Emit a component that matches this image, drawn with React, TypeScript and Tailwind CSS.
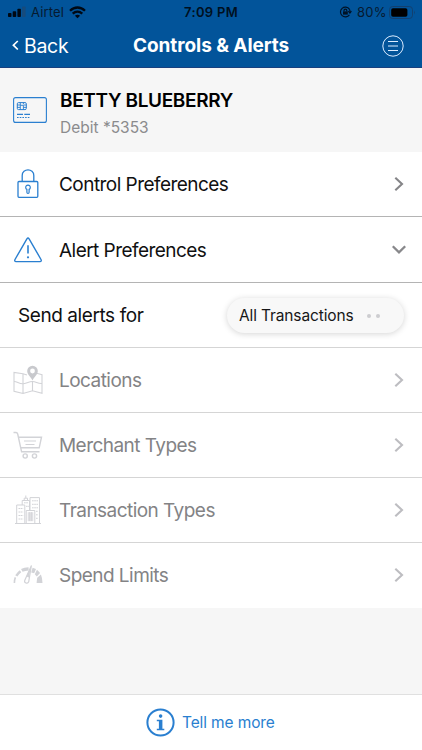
import React from 'react';

const BLUE = '#2a7fd0';
const PALE = '#d2d3d7';

function Chevron({ color }: { color: string }) {
  return (
    <svg width="12" height="16" viewBox="0 0 12 16" fill="none" stroke={color} strokeWidth="2.1">
      <path d="M2.3 1.8 L9 8 L2.3 14.2" />
    </svg>
  );
}

function ChevronDown() {
  return (
    <svg width="16" height="12" viewBox="0 0 16 12" fill="none" stroke="#88888b" strokeWidth="2.3">
      <path d="M1.8 2.2 L8 8.3 L14.2 2.2" />
    </svg>
  );
}

function StatusBar() {
  return (
    <div className="flex h-6 items-center text-[#061a30]">
      <div className="flex w-[183px] items-center pl-2">
        <svg width="19" height="12" viewBox="0 0 19 12" fill="#000914">
          <rect x="0" y="7" width="3.5" height="4" rx=".8" />
          <rect x="4.7" y="5.2" width="3.5" height="5.8" rx=".8" />
          <rect x="9.4" y="2.8" width="3.5" height="8.2" rx=".8" />
          <rect x="14.1" y="0.5" width="3.5" height="10.5" rx=".8" fill="#174b7c" />
        </svg>
        <span className="ml-1 text-[13px] leading-6 tracking-[0.15px]">Airtel</span>
        <svg className="ml-[5px]" width="17" height="13" viewBox="0 0 17 13" fill="none" stroke="#000914" strokeWidth="2.3">
          <path d="M1 4.7 C5.4 .4 11.6 .4 16 4.7" />
          <path d="M3.7 7.6 C6.6 5 10.4 5 13.3 7.6" />
          <path d="M8.5 12.3 L5.9 9.7 C7.4 8.4 9.6 8.4 11.1 9.7Z" fill="#000914" stroke="none" />
        </svg>
      </div>
      <span className="w-[156px] pl-px text-[13px] font-semibold leading-6 tracking-[0.35px] text-[#00101f]">7:09 PM</span>
      <svg width="13" height="12" viewBox="0 0 13 12" fill="none" stroke="#001225" strokeWidth="1.2">
        <path d="M10.4 3.2 A4.9 4.9 0 1 0 10.4 8.8 M9.3 5.2 L10.9 7 L12.4 5.2" />
        <path d="M10.9 6.6 A4.9 4.9 0 0 0 10.4 3.2" />
        <rect x="4" y="5.4" width="4.8" height="3.2" fill="#001225" stroke="none" />
        <path d="M5 5.6 V4.6 A1.4 1.4 0 0 1 7.8 4.6 V5.6" />
      </svg>
      <span className="ml-[5px] w-[32px] text-[13px] leading-6 tracking-[0.2px]">80%</span>
      <svg width="27" height="13" viewBox="0 0 27 13" fill="none">
        <rect x=".5" y=".5" width="23" height="12" rx="3.2" stroke="#12406f" />
        <rect x="2.2" y="2.2" width="16.2" height="8.6" rx="1.8" fill="#000" />
        <path d="M25 4.6 Q26.8 6.5 25 8.4Z" fill="#12406f" />
      </svg>
    </div>
  );
}

function Header() {
  return (
    <header className="h-[68px] border-b border-[#18407f] bg-[#02549a]">
      <StatusBar />
      <div className="flex h-[43px] items-center text-white">
        <div className="flex w-[133px] items-center pl-3">
          <svg width="7" height="11" viewBox="0 0 7 11" fill="none" stroke="#fff" strokeWidth="1.7">
            <path d="M5.8 1 L1.4 5.2 L5.8 9.5" />
          </svg>
          <span className="ml-[5px] text-[19.5px] leading-6 tracking-[-0.3px]">Back</span>
        </div>
        <h1 className="w-[249px] whitespace-nowrap text-[19px] font-bold leading-6 tracking-[-0.06px]">Controls &amp; Alerts</h1>
        <svg width="22" height="22" viewBox="0 0 22 22" fill="none" stroke="#dcecff" strokeWidth="1">
          <circle cx="11" cy="11" r="10.2" />
          <path d="M6 6.5 H16 M6 11 H16 M6 15.5 H16" />
        </svg>
      </div>
    </header>
  );
}

function CardIcon() {
  return (
    <svg width="34" height="26" viewBox="0 0 34 26" fill="none" stroke={BLUE}>
      <rect x=".6" y=".6" width="32.8" height="24.8" rx="2" strokeWidth="1.1" />
      <rect x="4.3" y="5.6" width="9" height="7" rx="1.2" />
      <path d="M4 8 H7.3 M4 10.4 H7.3 M7.3 5.6 V12.6 M10.4 8 H13.4 M10.4 10.4 H13.4 M7.3 8.3 H10.4 V12.6 M10.4 5.6 V7" strokeWidth=".9" />
      <path d="M4 17.3 H10 M11.3 17.3 H17" strokeWidth="1.2" />
      <path d="M4 20.5 H17" strokeWidth="1.2" strokeDasharray="1.6 1.1" />
    </svg>
  );
}

function LockIcon() {
  return (
    <svg width="22" height="30" viewBox="0 0 22 30" fill="none" stroke={BLUE} strokeWidth="1.3">
      <rect x="1" y="12.5" width="19.8" height="15.8" rx="1" />
      <path d="M5.2 12.5 V6.5 C5.2 -1 16.8 -1 16.8 6.5 V12.5" />
      <path d="M9.9 20.4 A2.3 2.3 0 1 1 12.1 20.4 V23.3 Q12.1 24.5 11 24.5 Q9.9 24.5 9.9 23.3Z" strokeWidth="1.2" />
    </svg>
  );
}

function WarningIcon() {
  return (
    <svg width="30" height="26" viewBox="0 0 30 26" fill="none" stroke={BLUE} strokeWidth="1.4">
      <path d="M13.9 1.8 Q15 .3 16.1 1.8 L28 22.5 Q28.9 24.4 26.9 24.6 H3.1 Q1.1 24.4 2 22.5Z" strokeLinejoin="round" />
      <path d="M15 8.2 V16.5" strokeWidth="1.6" />
      <circle cx="15" cy="20.3" r="1.1" fill={BLUE} stroke="none" />
    </svg>
  );
}

function MapIcon() {
  return (
    <svg width="30" height="30" viewBox="0 0 30 30" fill="none" stroke={PALE} strokeWidth="1.1">
      <path d="M14 10 L10 8.8 L1 7.4 V26.3 L10 28.5 L19.5 25.7 L29 28.2 V9.6 L23.5 8.2 M10 8.8 V28.5 M19.5 16 V25.7" />
      <path d="M1 16.5 C4 16.3 6 19 10 18.8 C13 18.6 16 16.5 19.5 16.5 C23 16.5 25 19 29 18.5" />
      <path d="M19.5 15.5 C18 12 14.2 9.8 14.2 6 A5.3 5.3 0 0 1 24.8 6 C24.8 9.8 21 12 19.5 15.5Z M19.5 3.6 A2.4 2.4 0 1 0 19.5 8.4 A2.4 2.4 0 1 0 19.5 3.6Z" fill="#c8c9cd" fillRule="evenodd" stroke="none" />
    </svg>
  );
}

function CartIcon() {
  return (
    <svg width="30" height="28" viewBox="0 0 30 28" fill="none" stroke={PALE} strokeWidth="1.4">
      <path d="M.5 1.5 H3 Q4.3 1.5 4.7 3 L8.6 20.8 H26.5 M5.5 6.2 H28.5 L26.2 16.8 H7.8" />
      <path d="M11 10 H23 M12.5 13.5 H21.5" strokeWidth="1.1" />
      <circle cx="12.2" cy="25" r="2.1" />
      <circle cx="21.5" cy="25" r="2.1" />
    </svg>
  );
}

function BuildingsIcon() {
  return (
    <svg width="28" height="30" viewBox="0 0 28 30" fill="none" stroke={PALE} strokeWidth="1">
      <path d="M1 28.5 H27 M2.7 28.5 V10 H10.8 V28.5 M8.2 10 V5.5 H15.5 V15 M10.2 5.5 V3.2 H13.5 V5.5 M11.8 3.2 V.5 M16 15 V2.6 H25.5 V28.5 M12.2 28.5 V15.5 H20.8 V28.5" />
      <path d="M4.5 13.5 H9.2 M4.5 17 H9.2 M4.5 20.5 H9.2 M4.5 24 H9.2 M18 5.8 H24 M18 9.3 H24 M18 12.8 H24 M22 16.3 H24 M22 19.8 H24 M22 23.3 H24 M10 7.8 H14 M12 11.3 H15" strokeDasharray="1.7 .5" />
      <rect x="13.7" y="17.2" width="5.6" height="9" fill="#e1e1e5" stroke="none" />
      <path d="M15.6 17 V26 M17.5 17 V26" strokeWidth=".7" />
    </svg>
  );
}

function GaugeIcon() {
  return (
    <svg width="30" height="20" viewBox="0 0 30 20" fill="none" stroke={PALE}>
      <path d="M1.4 18 Q1.3 15 2.4 12.4" strokeWidth="1.6" />
      <path d="M3.3 10.9 Q5 8 7.5 6.2" strokeWidth="2.5" />
      <path d="M8.8 5.4 Q11.5 3.9 15.6 3.8" strokeWidth="3.2" />
      <path d="M19.6 2.8 L23 4 L21.2 8.2 L18.2 7.4Z M24 4.7 L27.1 8 L23.8 11.6 L21.8 9.2Z M27.9 9.4 Q29.5 13 29.5 18 H23.6 Q23.8 15 24.2 12.7Z" fill={PALE} stroke="none" />
      <path d="M18.3 .8 L15.7 16.8 A2.1 2.1 0 1 1 11.8 15.2Z" fill="#fff" strokeWidth="1.2" strokeLinejoin="round" />
      <path d="M18.3 1 L15.8 12.5 L13.4 11.5Z" fill={PALE} stroke="none" />
    </svg>
  );
}

interface RowProps {
  icon: React.ReactNode;
  label: string;
  height?: string;
  muted?: boolean;
  open?: boolean;
  last?: boolean;
}

function Row({ icon, label, height = 'h-[65px]', muted, open, last }: RowProps) {
  const border = last ? 'border-transparent' : muted ? 'border-[#d5d5d5]' : 'border-[#b4b4b4]';
  return (
    <div className={`flex shrink-0 items-center border-b bg-white ${height} ${border}`}>
      <div className="flex w-[59px] items-center justify-center pr-1">{icon}</div>
      <span className={`flex-1 whitespace-nowrap pt-[2px] text-[19px] leading-6 tracking-[-0.54px] ${muted ? 'text-[#838385]' : 'text-[#101011]'}`}>{label}</span>
      <div className="flex w-[46px] justify-center">
        {open ? <ChevronDown /> : <Chevron color={muted ? '#bdbdc1' : '#858588'} />}
      </div>
    </div>
  );
}

export default function App() {
  return (
    <main className="flex h-[750px] w-[422px] flex-col overflow-hidden bg-[#f6f6f6] font-['Inter','Liberation_Sans',sans-serif]">
      <Header />
      <section className="flex h-[84px] items-center pl-[13px]">
        <CardIcon />
        <div className="ml-[13px] pt-2">
          <h2 className="whitespace-nowrap text-[19px] font-semibold leading-[27px] tracking-[-0.36px] text-black">BETTY BLUEBERRY</h2>
          <p className="text-[15.5px] leading-[28px] text-[#8b8b8d]">Debit *5353</p>
        </div>
      </section>
      <Row icon={<LockIcon />} label="Control Preferences" height="h-[65px]" />
      <Row icon={<WarningIcon />} label="Alert Preferences" height="h-[66px]" open />
      <div className="flex h-[65px] items-center justify-between border-b border-[#d5d5d5] bg-white pl-[18px] pr-[18px]">
        <span className="pt-[2px] text-[19px] leading-6 tracking-[-0.42px] text-[#101011]">Send alerts for</span>
        <button className="flex h-[35px] w-[177px] items-center rounded-full bg-[#f8f8f8] pl-3 shadow-[0_1px_6px_rgba(0,0,0,0.17)]">
          <span className="w-[128px] whitespace-nowrap pt-px text-left text-[15.5px] leading-6 tracking-[-0.13px] text-[#161617]">All Transactions</span>
          <span className="flex gap-[5px] pt-[2px]">
            <i className="size-1 rounded-full bg-[#cdcdd0]" />
            <i className="size-1 rounded-full bg-[#cdcdd0]" />
          </span>
        </button>
      </div>
      <Row icon={<MapIcon />} label="Locations" muted />
      <Row icon={<CartIcon />} label="Merchant Types" muted />
      <Row icon={<BuildingsIcon />} label="Transaction Types" muted />
      <Row icon={<GaugeIcon />} label="Spend Limits" muted last />
      <footer className="mt-auto flex h-14 items-center border-t border-[#e0e0e0] bg-white pl-[146px] text-[#2a7fd0]">
        <svg width="29" height="29" viewBox="0 0 29 29" fill="none" stroke={BLUE}>
          <circle cx="14.5" cy="14.5" r="13.1" strokeWidth="2" />
          <circle cx="14.6" cy="8.1" r="1.8" fill={BLUE} stroke="none" />
          <path d="M10.8 11.7 H16.4 V20.7 H18.3 V22.2 H10.8 V20.7 H12.9 V13.2 H10.8Z" fill={BLUE} stroke="none" />
        </svg>
        <span className="ml-[7px] whitespace-nowrap text-[15.5px] leading-6 tracking-[-0.12px]">Tell me more</span>
      </footer>
    </main>
  );
}
